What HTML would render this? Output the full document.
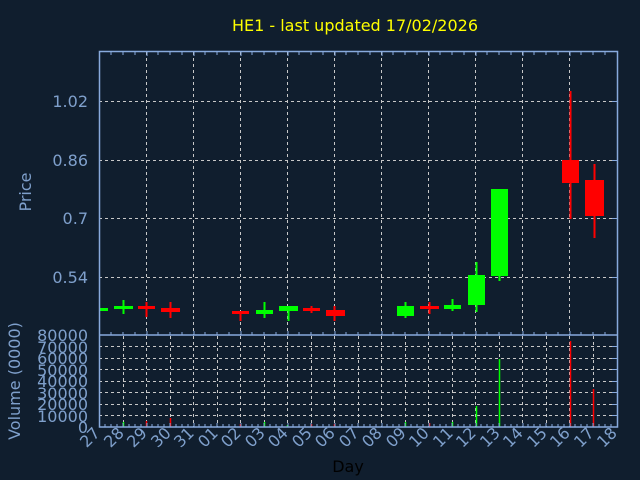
<!DOCTYPE html>
<html><head><meta charset="utf-8"><style>
html,body{margin:0;padding:0;background:#101e2e;}
svg{display:block;font-family:"DejaVu Sans","Liberation Sans",sans-serif;}
</style></head><body>
<svg width="640" height="480" viewBox="0 0 640 480" xmlns="http://www.w3.org/2000/svg">
<rect width="640" height="480" fill="#101e2e"/>
<text x="355" y="31" fill="#ffff00" font-size="16" text-anchor="middle">HE1 - last updated 17/02/2026</text>
<!-- price grid -->
<g stroke="#c8c8c8" stroke-width="1" stroke-dasharray="3,3">
<line x1="99" y1="101.5" x2="617" y2="101.5"/>
<line x1="99" y1="160.5" x2="617" y2="160.5"/>
<line x1="99" y1="218.5" x2="617" y2="218.5"/>
<line x1="99" y1="277.5" x2="617" y2="277.5"/>
<line x1="146.5" y1="52" x2="146.5" y2="335"/>
<line x1="193.5" y1="52" x2="193.5" y2="335"/>
<line x1="240.5" y1="52" x2="240.5" y2="335"/>
<line x1="287.5" y1="52" x2="287.5" y2="335"/>
<line x1="334.5" y1="52" x2="334.5" y2="335"/>
<line x1="381.5" y1="52" x2="381.5" y2="335"/>
<line x1="428.5" y1="52" x2="428.5" y2="335"/>
<line x1="475.5" y1="52" x2="475.5" y2="335"/>
<line x1="522.5" y1="52" x2="522.5" y2="335"/>
<line x1="569.5" y1="52" x2="569.5" y2="335"/>
</g>
<!-- volume grid -->
<g stroke="#c8c8c8" stroke-width="1" stroke-dasharray="3,3">
<line x1="99" y1="346.5" x2="617" y2="346.5"/>
<line x1="99" y1="358.5" x2="617" y2="358.5"/>
<line x1="99" y1="369.5" x2="617" y2="369.5"/>
<line x1="99" y1="381.5" x2="617" y2="381.5"/>
<line x1="99" y1="392.5" x2="617" y2="392.5"/>
<line x1="99" y1="404.5" x2="617" y2="404.5"/>
<line x1="99" y1="415.5" x2="617" y2="415.5"/>
<line x1="123.5" y1="336" x2="123.5" y2="427"/><line x1="146.5" y1="336" x2="146.5" y2="427"/>
<line x1="170.5" y1="336" x2="170.5" y2="427"/><line x1="193.5" y1="336" x2="193.5" y2="427"/>
<line x1="217.5" y1="336" x2="217.5" y2="427"/><line x1="240.5" y1="336" x2="240.5" y2="427"/>
<line x1="264.5" y1="336" x2="264.5" y2="427"/><line x1="287.5" y1="336" x2="287.5" y2="427"/>
<line x1="311.5" y1="336" x2="311.5" y2="427"/><line x1="334.5" y1="336" x2="334.5" y2="427"/>
<line x1="358.5" y1="336" x2="358.5" y2="427"/><line x1="381.5" y1="336" x2="381.5" y2="427"/>
<line x1="405.5" y1="336" x2="405.5" y2="427"/><line x1="428.5" y1="336" x2="428.5" y2="427"/>
<line x1="452.5" y1="336" x2="452.5" y2="427"/><line x1="475.5" y1="336" x2="475.5" y2="427"/>
<line x1="499.5" y1="336" x2="499.5" y2="427"/><line x1="522.5" y1="336" x2="522.5" y2="427"/>
<line x1="546.5" y1="336" x2="546.5" y2="427"/><line x1="569.5" y1="336" x2="569.5" y2="427"/>
<line x1="593.5" y1="336" x2="593.5" y2="427"/>
</g>
<!-- candles -->
<g stroke-width="2">
<rect x="99" y="308" width="9" height="3" fill="#00ff00"/>
<line x1="123.5" y1="300" x2="123.5" y2="314" stroke="#00ff00"/><rect x="114" y="306" width="19" height="3" fill="#00ff00"/>
<line x1="146.5" y1="302" x2="146.5" y2="317" stroke="#ff0000"/><rect x="138" y="306" width="17" height="3" fill="#ff0000"/>
<line x1="170.5" y1="302" x2="170.5" y2="318" stroke="#ff0000"/><rect x="161" y="308" width="19" height="4" fill="#ff0000"/>
<line x1="240.5" y1="311" x2="240.5" y2="321" stroke="#ff0000"/><rect x="232" y="311" width="17" height="3" fill="#ff0000"/>
<line x1="264.5" y1="302" x2="264.5" y2="318" stroke="#00ff00"/><rect x="256" y="310" width="17" height="4" fill="#00ff00"/>
<line x1="288.5" y1="306" x2="288.5" y2="321" stroke="#00ff00"/><rect x="279" y="306" width="19" height="5" fill="#00ff00"/>
<line x1="311.5" y1="306" x2="311.5" y2="313" stroke="#ff0000"/><rect x="303" y="308" width="17" height="3" fill="#ff0000"/>
<line x1="334.5" y1="306" x2="334.5" y2="321" stroke="#ff0000"/><rect x="326" y="310" width="19" height="6" fill="#ff0000"/>
<line x1="405.5" y1="302" x2="405.5" y2="318" stroke="#00ff00"/><rect x="397" y="306" width="17" height="10" fill="#00ff00"/>
<line x1="429.5" y1="302" x2="429.5" y2="314" stroke="#ff0000"/><rect x="420" y="306" width="19" height="3" fill="#ff0000"/>
<line x1="452.5" y1="299" x2="452.5" y2="311" stroke="#00ff00"/><rect x="444" y="305" width="17" height="4" fill="#00ff00"/>
<line x1="476.5" y1="262" x2="476.5" y2="312" stroke="#00ff00"/><rect x="468" y="275" width="17" height="30" fill="#00ff00"/>
<line x1="499.5" y1="189" x2="499.5" y2="281" stroke="#00ff00"/><rect x="491" y="189" width="17" height="87" fill="#00ff00"/>
<line x1="570.5" y1="91" x2="570.5" y2="219" stroke="#ff0000"/><rect x="562" y="160" width="17" height="23" fill="#ff0000"/>
<line x1="594.5" y1="164" x2="594.5" y2="238" stroke="#ff0000"/><rect x="585" y="180" width="19" height="36" fill="#ff0000"/>
</g>
<!-- volume bars -->
<g stroke-width="1.5">
<line x1="123.5" y1="422" x2="123.5" y2="427" stroke="#00ff00"/>
<line x1="146.5" y1="421" x2="146.5" y2="427" stroke="#ff0000"/>
<line x1="170.5" y1="418" x2="170.5" y2="427" stroke="#ff0000"/>
<line x1="240.5" y1="424" x2="240.5" y2="427" stroke="#ff0000"/>
<line x1="264.5" y1="422" x2="264.5" y2="427" stroke="#00ff00"/>
<line x1="287.5" y1="425" x2="287.5" y2="427" stroke="#00ff00"/>
<line x1="311.5" y1="424" x2="311.5" y2="427" stroke="#ff0000"/>
<line x1="334.5" y1="424" x2="334.5" y2="427" stroke="#ff0000"/>
<line x1="405.5" y1="422" x2="405.5" y2="427" stroke="#00ff00"/>
<line x1="429.5" y1="423" x2="429.5" y2="427" stroke="#ff0000"/>
<line x1="452.5" y1="422" x2="452.5" y2="427" stroke="#00ff00"/>
<line x1="476.5" y1="406" x2="476.5" y2="427" stroke="#00ff00"/>
<line x1="499.5" y1="359" x2="499.5" y2="427" stroke="#00ff00"/>
<line x1="570.5" y1="341" x2="570.5" y2="427" stroke="#ff0000"/>
<line x1="593.5" y1="389" x2="593.5" y2="427" stroke="#ff0000"/>
</g>
<!-- axes -->
<g stroke="#88aadd" stroke-width="1.5" fill="none">
<rect x="99.5" y="51.5" width="518" height="375.5"/>
<line x1="99" y1="335" x2="618" y2="335"/>
</g>
<g stroke="#88aadd" stroke-width="1">
<path d="M111 52v3M123 52v3M135 52v3M147 52v4M158 52v3M170 52v3M182 52v3M194 52v4M205 52v3M217 52v3M229 52v3M241 52v4M252 52v3M264 52v3M276 52v3M288 52v4M299 52v3M311 52v3M323 52v3M335 52v4M346 52v3M358 52v3M370 52v3M382 52v4M393 52v3M405 52v3M417 52v3M429 52v4M440 52v3M452 52v3M464 52v3M476 52v4M487 52v3M499 52v3M511 52v3M523 52v4M534 52v3M546 52v3M558 52v3M570 52v4M581 52v3M593 52v3M605 52v3"/>
<path d="M111 335v-3M123 335v-3M135 335v-3M147 335v-4M158 335v-3M170 335v-3M182 335v-3M194 335v-4M205 335v-3M217 335v-3M229 335v-3M241 335v-4M252 335v-3M264 335v-3M276 335v-3M288 335v-4M299 335v-3M311 335v-3M323 335v-3M335 335v-4M346 335v-3M358 335v-3M370 335v-3M382 335v-4M393 335v-3M405 335v-3M417 335v-3M429 335v-4M440 335v-3M452 335v-3M464 335v-3M476 335v-4M487 335v-3M499 335v-3M511 335v-3M523 335v-4M534 335v-3M546 335v-3M558 335v-3M570 335v-4M581 335v-3M593 335v-3M605 335v-3"/>
<path d="M105 427v-3M111 427v-3M117 427v-3M123 427v-4M129 427v-3M135 427v-3M141 427v-3M147 427v-4M152 427v-3M158 427v-3M164 427v-3M170 427v-4M176 427v-3M182 427v-3M188 427v-3M194 427v-4M199 427v-3M205 427v-3M211 427v-3M217 427v-4M223 427v-3M229 427v-3M235 427v-3M241 427v-4M246 427v-3M252 427v-3M258 427v-3M264 427v-4M270 427v-3M276 427v-3M282 427v-3M288 427v-4M293 427v-3M299 427v-3M305 427v-3M311 427v-4M317 427v-3M323 427v-3M329 427v-3M335 427v-4M340 427v-3M346 427v-3M352 427v-3M358 427v-4M364 427v-3M370 427v-3M376 427v-3M382 427v-4M387 427v-3M393 427v-3M399 427v-3M405 427v-4M411 427v-3M417 427v-3M423 427v-3M429 427v-4M434 427v-3M440 427v-3M446 427v-3M452 427v-4M458 427v-3M464 427v-3M470 427v-3M476 427v-4M481 427v-3M487 427v-3M493 427v-3M499 427v-4M505 427v-3M511 427v-3M517 427v-3M523 427v-4M528 427v-3M534 427v-3M540 427v-3M546 427v-4M552 427v-3M558 427v-3M564 427v-3M570 427v-4M575 427v-3M581 427v-3M587 427v-3M593 427v-4M599 427v-3M605 427v-3M611 427v-3"/>
<path d="M617 101.5h-5M617 160.5h-5M617 218.5h-5M617 277.5h-5M617 346.5h-5M617 358.5h-5M617 369.5h-5M617 381.5h-5M617 392.5h-5M617 404.5h-5M617 415.5h-5"/>
</g>
<!-- labels -->
<g fill="#7fa0cc" font-size="16" text-anchor="end">
<text x="88" y="107">1.02</text>
<text x="88" y="166">0.86</text>
<text x="88" y="224">0.7</text>
<text x="88" y="283">0.54</text>
<text x="88" y="341">80000</text>
<text x="88" y="353">70000</text>
<text x="88" y="364">60000</text>
<text x="88" y="376">50000</text>
<text x="88" y="387">40000</text>
<text x="88" y="399">30000</text>
<text x="88" y="410">20000</text>
<text x="88" y="422">10000</text>
<text x="88" y="433">0</text>
</g>
<text transform="translate(31,192) rotate(-90)" fill="#7fa0cc" font-size="16" text-anchor="middle">Price</text>
<text transform="translate(20,381) rotate(-90)" fill="#7fa0cc" font-size="16" text-anchor="middle">Volume (0000)</text>
<g fill="#7fa0cc" font-size="16" text-anchor="end">
<text transform="translate(101,434) rotate(-45)">27</text>
<text transform="translate(125,434) rotate(-45)">28</text>
<text transform="translate(148,434) rotate(-45)">29</text>
<text transform="translate(172,434) rotate(-45)">30</text>
<text transform="translate(195,434) rotate(-45)">31</text>
<text transform="translate(219,434) rotate(-45)">01</text>
<text transform="translate(242,434) rotate(-45)">02</text>
<text transform="translate(266,434) rotate(-45)">03</text>
<text transform="translate(289,434) rotate(-45)">04</text>
<text transform="translate(313,434) rotate(-45)">05</text>
<text transform="translate(336,434) rotate(-45)">06</text>
<text transform="translate(360,434) rotate(-45)">07</text>
<text transform="translate(383,434) rotate(-45)">08</text>
<text transform="translate(407,434) rotate(-45)">09</text>
<text transform="translate(430,434) rotate(-45)">10</text>
<text transform="translate(454,434) rotate(-45)">11</text>
<text transform="translate(477,434) rotate(-45)">12</text>
<text transform="translate(501,434) rotate(-45)">13</text>
<text transform="translate(524,434) rotate(-45)">14</text>
<text transform="translate(548,434) rotate(-45)">15</text>
<text transform="translate(571,434) rotate(-45)">16</text>
<text transform="translate(595,434) rotate(-45)">17</text>
<text transform="translate(618,434) rotate(-45)">18</text>
</g>
<text x="348" y="472" fill="#000000" font-size="16" text-anchor="middle">Day</text>
</svg>
</body></html>
